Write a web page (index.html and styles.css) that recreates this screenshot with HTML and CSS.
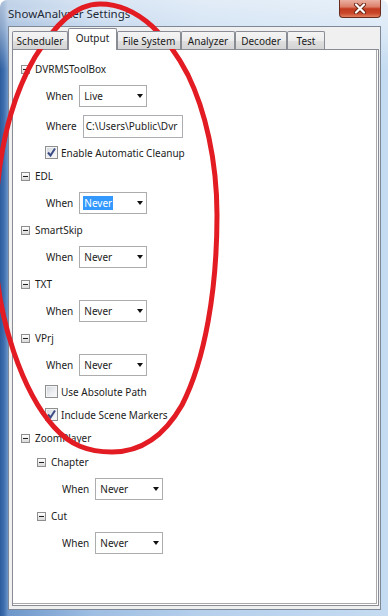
FILE: index.html
```
<!DOCTYPE html>
<html>
<head>
<meta charset="utf-8">
<link rel="stylesheet" href="styles.css">
</head>
<body>
<div class="window">
  <div class="titlebar">
    <span class="title">ShowAnalyzer Settings</span>
    <div class="close">
      <svg width="14" height="11" viewBox="0 0 14 11">
        <path d="M3 1.5 L11 9.5 M11 1.5 L3 9.5" stroke="#6a2416" stroke-width="4" stroke-linecap="round"/>
        <path d="M3 1.5 L11 9.5 M11 1.5 L3 9.5" stroke="#ffffff" stroke-width="2.2" stroke-linecap="round"/>
      </svg>
    </div>
  </div>
  <div class="client">
    <div class="tabs">
      <div class="tab t-sched">Scheduler</div>
      <div class="tab sel t-out">Output</div>
      <div class="tab t-fs">File System</div>
      <div class="tab t-an">Analyzer</div>
      <div class="tab t-dec">Decoder</div>
      <div class="tab t-test">Test</div>
    </div>
    <div class="panel">
      <div class="tree">
        <div class="hdr"><span class="exp"></span><span>DVRMSToolBox</span></div>
        <div class="row"><span>When</span><div class="combo"><span>Live</span><i class="arrow"></i></div></div>
        <div class="row"><span>Where</span><div class="textbox">C:\Users\Public\Dvr</div></div>
        <div class="chkrow"><span class="chk"><svg width="11" height="11" viewBox="0 0 11 11"><path d="M2 5.5 L4.5 8.5 L9 1.5" fill="none" stroke="#3c4d86" stroke-width="2"/></svg></span><span>Enable Automatic Cleanup</span></div>

        <div class="hdr"><span class="exp"></span><span>EDL</span></div>
        <div class="row"><span>When</span><div class="combo"><span class="hl">Never</span><i class="arrow"></i></div></div>

        <div class="hdr"><span class="exp"></span><span>SmartSkip</span></div>
        <div class="row"><span>When</span><div class="combo"><span>Never</span><i class="arrow"></i></div></div>

        <div class="hdr"><span class="exp"></span><span>TXT</span></div>
        <div class="row"><span>When</span><div class="combo"><span>Never</span><i class="arrow"></i></div></div>

        <div class="hdr"><span class="exp"></span><span>VPrj</span></div>
        <div class="row"><span>When</span><div class="combo"><span>Never</span><i class="arrow"></i></div></div>
        <div class="chkrow"><span class="chk"></span><span>Use Absolute Path</span></div>
        <div class="chkrow"><span class="chk"><svg width="11" height="11" viewBox="0 0 11 11"><path d="M2 5.5 L4.5 8.5 L9 1.5" fill="none" stroke="#3c4d86" stroke-width="2"/></svg></span><span>Include Scene Markers</span></div>

        <div class="hdr"><span class="exp"></span><span>ZoomPlayer</span></div>
        <div class="children">
          <div class="hdr"><span class="exp"></span><span>Chapter</span></div>
          <div class="row"><span>When</span><div class="combo"><span>Never</span><i class="arrow"></i></div></div>
          <div class="hdr"><span class="exp"></span><span>Cut</span></div>
          <div class="row"><span>When</span><div class="combo"><span>Never</span><i class="arrow"></i></div></div>
        </div>
      </div>
    </div>
  </div>
  <svg class="annot" width="388" height="616" viewBox="0 0 388 616">
    <path d="M100,4 C140,4 170,40 188,75 C205,110 217,160 217,215 C217,290 205,360 182,405 C162,440 138,452 112,452 C88,452 70,445 54,427 C25,395 -5,320 -5,240 C-5,160 10,100 35,57 C55,25 75,4 100,4 Z" fill="none" stroke="#e31b23" stroke-width="5"/>
  </svg>
</div>
</body>
</html>
```
FILE: styles.css
```
html, body {
  margin: 0;
  padding: 0;
}
body {
  width: 388px;
  height: 616px;
  overflow: hidden;
  background: #ffffff;
  font-family: "Noto Sans", "Liberation Sans", sans-serif;
  font-size: 10px;
  color: #1b1b1b;
}
.window {
  position: relative;
  width: 388px;
  height: 616px;
  display: flex;
  flex-direction: column;
  overflow: hidden;
  border-radius: 7px 7px 0 0;
  background:
    linear-gradient(to bottom, rgba(255,255,255,0.6) 0, rgba(255,255,255,0.45) 26px, rgba(255,255,255,0) 70px),
    linear-gradient(to right, #2d5c9c 0, #3f6fae 4px, #6c96ca 8px, #9dbde2 90px, #b6d0ec 200px, #c4dbf1 388px);
}
.titlebar {
  height: 26px;
  display: flex;
  align-items: flex-start;
  flex: none;
}
.title {
  margin-left: 8px;
  line-height: 28px;
  font-size: 11.5px;
  color: #1e2a38;
  text-shadow: 0 0 6px rgba(255,255,255,0.95);
}
.close {
  margin-left: auto;
  margin-right: 7px;
  width: 42px;
  height: 18px;
  box-sizing: border-box;
  border: 1px solid #6b2a1e;
  border-top: none;
  border-radius: 0 0 4px 4px;
  background: linear-gradient(to bottom, #eab0a2 0, #dc8069 40%, #c23a1f 52%, #c9472a 78%, #e2805f 100%);
  display: flex;
  align-items: center;
  justify-content: center;
}
.client {
  flex: 1;
  margin: 0 7px 6px 8px;
  background: #f0f0f0;
  border: 1px solid #7d8796;
  padding: 1px 1px 3px 3px;
  display: flex;
  flex-direction: column;
  min-height: 0;
}
.tabs {
  height: 21px;
  display: flex;
  align-items: flex-end;
  position: relative;
  z-index: 1;
  flex: none;
}
.tab {
  box-sizing: border-box;
  height: 18px;
  border: 1px solid #898c95;
  border-bottom: none;
  border-radius: 2px 2px 0 0;
  background: linear-gradient(to bottom, #f4f4f4 0, #ececec 50%, #e0e0e0 51%, #d4d4d4 100%);
  display: flex;
  align-items: center;
  justify-content: center;
  color: #1b1b1b;
}
.tab.sel {
  height: 22px;
  margin-bottom: -1px;
  background: #ffffff;
  padding-bottom: 3px;
}
.t-sched { width: 56px; }
.t-out { width: 49px; }
.t-fs { width: 64px; }
.t-an { width: 54px; }
.t-dec { width: 52px; }
.t-test { width: 38px; }
.panel {
  flex: 1;
  border: 1px solid #898c95;
  background: #ffffff;
  padding: 0 1px 1px 0;
  display: flex;
  min-height: 0;
}
.tree {
  flex: 1;
  border-right: 1px solid #a9a9a9;
  border-bottom: 1px solid #a9a9a9;
  padding: 7px 0 0 8px;
  overflow: hidden;
}
.hdr {
  height: 24px;
  display: flex;
  align-items: center;
  gap: 5px;
}
.exp {
  position: relative;
  width: 9px;
  height: 9px;
  box-sizing: border-box;
  border: 1px solid #8e8e8e;
  background: linear-gradient(to bottom, #ffffff, #d9d9d9);
}
.exp::after {
  content: "";
  position: absolute;
  left: 1px;
  right: 1px;
  top: 3px;
  height: 1px;
  background: #1f1f1f;
}
.row {
  height: 30px;
  display: flex;
  align-items: center;
  gap: 6px;
  padding-left: 25px;
}
.combo {
  width: 68px;
  height: 22px;
  box-sizing: border-box;
  border: 1px solid #acacac;
  background: #ffffff;
  display: flex;
  align-items: center;
  justify-content: space-between;
  padding: 0 3px 0 4px;
}
.arrow {
  width: 0;
  height: 0;
  border-left: 3.5px solid transparent;
  border-right: 3.5px solid transparent;
  border-top: 4px solid #111;
}
.hl {
  background: #3399ff;
  color: #ffffff;
  padding: 0 1px;
  margin-left: -1px;
}
.textbox {
  width: 100px;
  height: 23px;
  box-sizing: border-box;
  border: 1px solid #abadb3;
  padding-left: 2px;
  overflow: hidden;
  white-space: nowrap;
  display: flex;
  align-items: center;
}
.chkrow {
  height: 23px;
  display: flex;
  align-items: center;
  gap: 3px;
  padding-left: 24px;
}
.chk {
  width: 13px;
  height: 13px;
  box-sizing: border-box;
  border: 1px solid #8e8f8f;
  background: linear-gradient(135deg, #cfd3d9 0, #eef0f2 60%, #fbfbfb 100%);
  box-shadow: inset 0 0 0 1px #f4f4f4;
  display: flex;
  align-items: center;
  justify-content: center;
}
.children {
  padding-left: 16px;
}
.annot {
  position: absolute;
  left: 0;
  top: 0;
  pointer-events: none;
}
```
